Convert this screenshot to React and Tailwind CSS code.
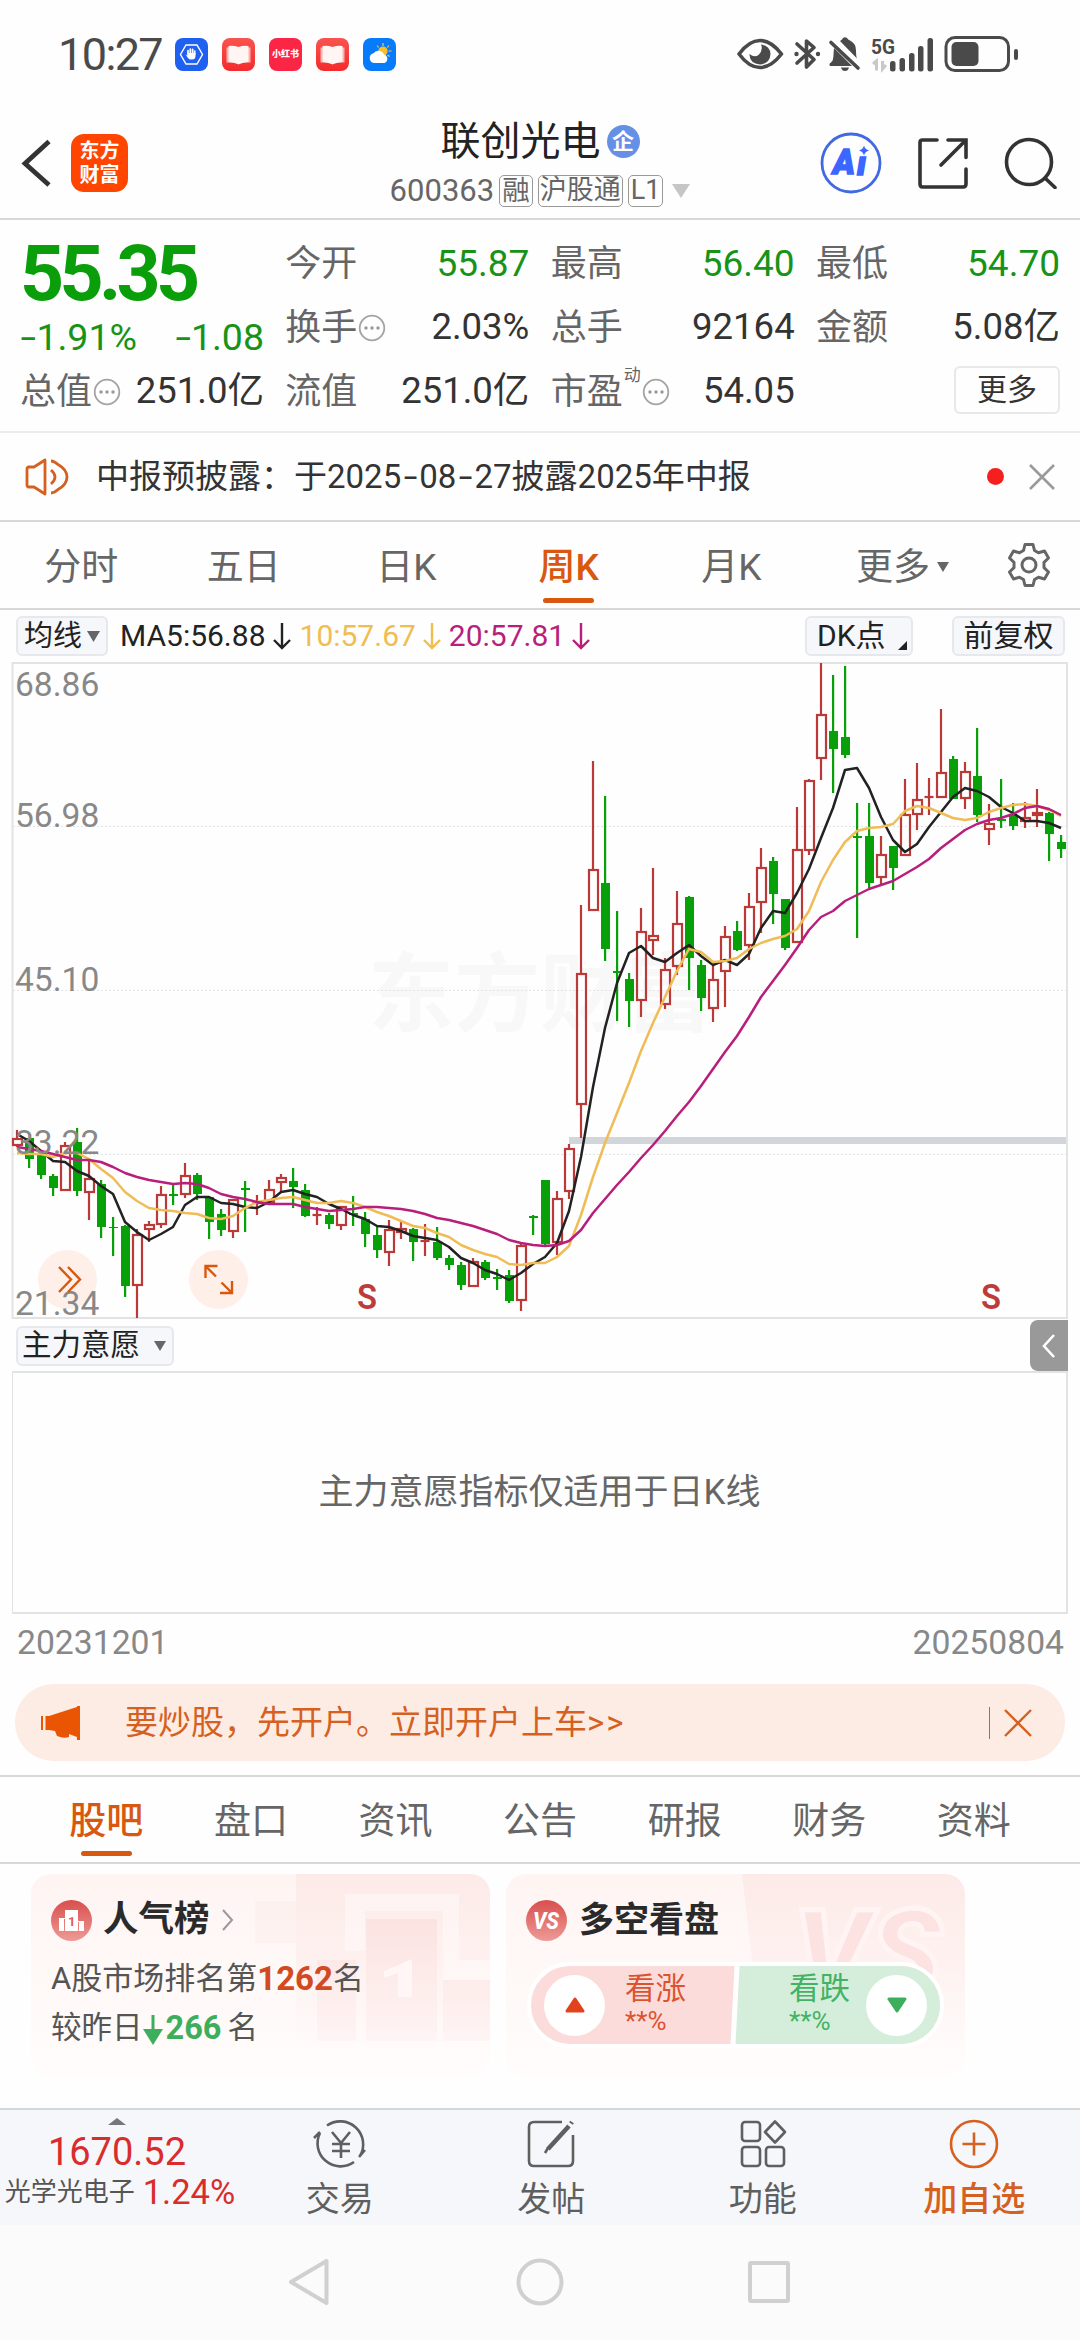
import React from "react";

// [up, high, body top, body bottom, low]
const candles = [
  [1, 1130, 1139, 1145, 1147],
  [0, 1138, 1138, 1159, 1168],
  [0, 1150, 1154, 1175, 1179],
  [0, 1174, 1176, 1188, 1196],
  [1, 1142, 1146, 1190, 1191],
  [0, 1128, 1142, 1191, 1196],
  [1, 1161, 1179, 1192, 1220],
  [0, 1180, 1184, 1227, 1238],
  [0, 1217, 1227, 1228, 1256],
  [0, 1225, 1226, 1286, 1297],
  [1, 1229, 1235, 1285, 1318],
  [1, 1221, 1225, 1229, 1242],
  [1, 1186, 1195, 1224, 1228],
  [0, 1184, 1194, 1196, 1205],
  [1, 1163, 1176, 1194, 1198],
  [0, 1173, 1175, 1194, 1200],
  [0, 1196, 1197, 1222, 1239],
  [0, 1209, 1214, 1230, 1236],
  [1, 1199, 1200, 1231, 1238],
  [0, 1181, 1188, 1190, 1232],
  [1, 1195, 1203, 1204, 1215],
  [1, 1180, 1190, 1202, 1202],
  [1, 1174, 1178, 1182, 1191],
  [0, 1168, 1181, 1187, 1208],
  [0, 1184, 1190, 1216, 1217],
  [1, 1207, 1215, 1215, 1225],
  [0, 1213, 1215, 1224, 1229],
  [1, 1206, 1207, 1225, 1230],
  [0, 1196, 1213, 1215, 1226],
  [0, 1212, 1219, 1234, 1247],
  [0, 1227, 1235, 1250, 1258],
  [1, 1220, 1230, 1252, 1266],
  [1, 1221, 1229, 1232, 1239],
  [0, 1228, 1229, 1242, 1261],
  [1, 1224, 1241, 1241, 1256],
  [0, 1227, 1242, 1258, 1260],
  [0, 1255, 1258, 1265, 1270],
  [0, 1262, 1265, 1285, 1290],
  [1, 1258, 1262, 1286, 1286],
  [0, 1260, 1262, 1278, 1280],
  [0, 1269, 1277, 1279, 1290],
  [0, 1270, 1275, 1301, 1303],
  [1, 1244, 1246, 1300, 1311],
  [0, 1215, 1216, 1218, 1235],
  [0, 1180, 1180, 1244, 1247],
  [1, 1191, 1199, 1242, 1255],
  [1, 1144, 1149, 1191, 1199],
  [1, 905, 974, 1104, 1138],
  [1, 761, 870, 910, 910],
  [0, 796, 883, 949, 961],
  [0, 911, 971, 973, 1021],
  [0, 973, 979, 1001, 1027],
  [1, 908, 932, 1000, 1017],
  [1, 868, 936, 940, 955],
  [1, 958, 970, 1004, 1009],
  [1, 891, 924, 966, 975],
  [0, 896, 897, 958, 990],
  [0, 960, 965, 998, 1011],
  [1, 965, 980, 1008, 1022],
  [1, 926, 937, 971, 1007],
  [0, 921, 931, 950, 951],
  [1, 893, 907, 945, 960],
  [1, 848, 868, 902, 933],
  [0, 857, 861, 894, 924],
  [0, 899, 899, 948, 950],
  [1, 807, 850, 942, 942],
  [1, 779, 781, 850, 855],
  [1, 663, 715, 758, 780],
  [0, 675, 731, 749, 793],
  [0, 666, 737, 755, 758],
  [0, 803, 836, 838, 938],
  [0, 803, 836, 883, 888],
  [1, 836, 855, 877, 884],
  [0, 846, 846, 868, 890],
  [1, 779, 815, 855, 855],
  [1, 763, 800, 814, 830],
  [1, 778, 797, 797, 815],
  [1, 709, 773, 797, 797],
  [0, 756, 759, 799, 799],
  [1, 762, 772, 798, 809],
  [0, 728, 776, 815, 822],
  [1, 804, 824, 829, 845],
  [0, 779, 819, 821, 828],
  [0, 803, 815, 826, 830],
  [1, 802, 818, 821, 828],
  [1, 789, 813, 815, 827],
  [0, 812, 813, 834, 861],
  [0, 835, 842, 849, 858],
];

const ma5 = [
  1134, 1141, 1151, 1161, 1162, 1171, 1176, 1186, 1194, 1222, 1232, 1240, 1234,
  1227, 1205, 1197, 1197, 1203, 1204, 1207, 1208, 1202, 1192, 1190, 1194, 1197,
  1204, 1209, 1215, 1219, 1226, 1227, 1231, 1236, 1238, 1240, 1247, 1258, 1263,
  1270, 1274, 1280, 1273, 1264, 1257, 1243, 1211, 1157, 1087, 1028, 983, 953,
  946, 958, 962, 953, 945, 956, 965, 960, 965, 954, 928, 911, 913, 893, 869,
  838, 808, 770, 768, 788, 817, 840, 852, 844, 827, 812, 797, 788, 791, 797,
  807, 813, 821, 821, 823, 828,
];

const ma10 = [
  1153, 1154, 1154, 1157, 1153, 1153, 1159, 1169, 1178, 1192, 1201, 1208, 1210,
  1211, 1213, 1214, 1218, 1219, 1216, 1208, 1202, 1200, 1198, 1197, 1200, 1203,
  1203, 1201, 1203, 1207, 1212, 1216, 1221, 1226, 1228, 1233, 1237, 1245, 1250,
  1254, 1257, 1264, 1265, 1263, 1263, 1257, 1246, 1215, 1177, 1143, 1113, 1083,
  1051, 1023, 997, 971, 949, 952, 962, 961, 958, 949, 943, 939, 936, 929, 911,
  882, 860, 842, 831, 828, 827, 824, 811, 806, 808, 813, 818, 820, 818, 812,
  808, 805, 804, 806, 810, 816,
];

const ma20 = [
  1147, 1149, 1151, 1154, 1157, 1160, 1160, 1162, 1167, 1173, 1177, 1180, 1182,
  1184, 1183, 1184, 1188, 1194, 1197, 1199, 1202, 1204, 1204, 1204, 1207, 1209,
  1211, 1210, 1209, 1207, 1207, 1208, 1209, 1211, 1214, 1218, 1220, 1223, 1226,
  1230, 1234, 1240, 1243, 1245, 1246, 1245, 1241, 1230, 1213, 1199, 1185, 1172,
  1158, 1145, 1131, 1116, 1102, 1086, 1069, 1052, 1036, 1017, 997, 981, 965,
  948, 930, 917, 911, 901, 895, 889, 885, 881, 874, 867, 859, 848, 839, 830,
  824, 820, 818, 814, 808, 806, 809, 815,
];

const toPoints = (list) => list.map((y, i) => `${17 + i * 12},${y}`).join(" ");

const Down = ({ className = "" }) => (
  <svg viewBox="0 0 12 12" className={className} fill="currentColor">
    <path d="M0 1h12L6 11z" />
  </svg>
);

const ArrowDown = () => (
  <svg
    viewBox="0 0 20 28"
    className="h-7 w-5"
    fill="none"
    stroke="currentColor"
    strokeWidth="2.4"
  >
    <path d="M10 1v25M2 18l8 8 8-8" />
  </svg>
);

const Info = () => (
  <svg viewBox="0 0 28 28" className="h-7 w-7" fill="none" stroke="#a3a3a3">
    <circle cx="14" cy="14" r="12.3" strokeWidth="1.8" />
    <g fill="#999" stroke="none">
      <circle cx="8" cy="14" r="1.7" />
      <circle cx="14" cy="14" r="1.7" />
      <circle cx="20" cy="14" r="1.7" />
    </g>
  </svg>
);

// wide minus / hyphen
const Dash = ({ className = "mx-[3.5px]" }) => (
  <span className={`inline-block scale-x-150 ${className}`}>-</span>
);

const BookApp = () => (
  <svg viewBox="0 0 33 33" className="h-[33px] w-[33px]">
    <defs>
      <linearGradient id="book" x1="0" y1="0" x2="0" y2="1">
        <stop offset="0" stopColor="#f9544f" />
        <stop offset="1" stopColor="#f52a2c" />
      </linearGradient>
    </defs>
    <rect width="33" height="33" rx="8" fill="url(#book)" />
    <path d="M4.5 9.5h24v15h-9l-3 2-3-2h-9z" fill="#fbb3ae" />
    <path
      d="M6.5 8q5-1 10 1 5-2 10-1v16q-5 .2-10 2.2-5-2-10-2.2z"
      fill="#fff5f2"
    />
  </svg>
);

const StatusBar = () => (
  <div className="flex h-[108px] items-center justify-between pl-[58px] pr-[59px] text-[#4a4a4a]">
    <div className="flex items-center">
      <span className="w-[117px] text-[45px] leading-none tracking-[-1.6px]">
        10:27
      </span>
      <div className="flex gap-[14px]">
        <svg viewBox="0 0 33 33" className="h-[33px] w-[33px]">
          <rect width="33" height="33" rx="8" fill="#1f60f0" />
          <path
            d="M11 7h11l5.5 9.5-5.5 9.500H11L5.500 16.500z"
            fill="none"
            stroke="#fff"
            strokeWidth="1.4"
          />
          <path
            d="M13 16v-3.500M15.300 15v-4M17.600 15v-3.600M19.700 16v-3"
            stroke="#fff"
            strokeWidth="1.7"
            strokeLinecap="round"
          />
          <path d="M10.500 16.500l2 1V15h8v3q0 3.500-3.500 3.500h-1q-2 0-3-1.500z" fill="#fff" />
        </svg>
        <BookApp />
        <div className="flex h-[33px] w-[33px] items-center justify-center rounded-lg bg-[#fb2545] text-[9px] font-black leading-none text-white">
          小红书
        </div>
        <BookApp />
        <svg viewBox="0 0 33 33" className="h-[33px] w-[33px]">
          <rect width="33" height="33" rx="8" fill="#077bfb" />
          <path
            d="M20 5v3M14 7.500l1.600 2M26 7.500l-1.600 2M25.500 13h3M24.500 17l2 1.500"
            stroke="#fbc93a"
            strokeWidth="1.2"
          />
          <circle cx="20" cy="13" r="4.600" fill="#fbbf24" />
          <path
            d="M11 25a5 5 0 01-.5-9.800 6 6 0 0110.500 1.300A4.500 4.500 0 0121.500 25z"
            fill="#fff"
          />
        </svg>
      </div>
    </div>
    <svg viewBox="0 0 284 40" className="h-10 w-[284px]">
      <g fill="none" stroke="#4a4a4a">
        <path
          d="M2 20Q12 6.500 23 6.500T44.500 20Q34 33.500 23 33.500T2 20z"
          strokeWidth="3.6"
          strokeLinejoin="round"
        />
        <path
          d="M60 10l17 15.500-7.500 7.500V7L77 13.500 60 29"
          strokeWidth="3.6"
          strokeLinejoin="round"
          strokeLinecap="round"
        />
        <path d="M94 8.500L121 34" strokeWidth="3.6" strokeLinecap="round" />
        <rect x="209" y="3.500" width="62.500" height="33" rx="9" strokeWidth="3" />
      </g>
      <g fill="#4a4a4a">
        <path d="M24 10.500q9 1 9.500 9.500-.5 9.500-10.500 10.500-10-1-10.500-9.500l0-1q5 4 9 1 5-5 2.500-10.500z" />
        <circle cx="59.500" cy="20" r="2.2" />
        <circle cx="81" cy="20" r="2.2" />
        <path d="M97 14l18 18H93q-1.500-2 1-3.500 2.500-2 2.500-8z" />
        <path d="M103 7q2-1 3-3 2-1.500 4 0 1 1.500 3 2.500 6 3 6 10 0 6 1 8z" />
        <path d="M104 33.500h8q-1 3.500-4 3.500t-4-3.500z" />
        <rect x="153" y="27" width="5.500" height="10.500" rx="2.500" />
        <rect x="162.500" y="24" width="5.500" height="13.500" rx="2.500" />
        <rect x="172" y="19" width="5.500" height="18.500" rx="2.500" />
        <rect x="181" y="12" width="5.500" height="25.500" rx="2.500" />
        <rect x="190.500" y="4" width="5.500" height="33.500" rx="2.500" />
        <rect x="214.500" y="8" width="27" height="24" rx="5" />
        <rect x="277" y="15" width="4" height="11" rx="2" />
        <text x="134" y="20" fontSize="21" fontWeight="700" textLength="24" lengthAdjust="spacingAndGlyphs">
          5G
        </text>
      </g>
      <path
        d="M136 30l3.500-3v9.500M149 31l-3.500 4V27"
        stroke="#c8c8c8"
        strokeWidth="3"
        fill="none"
      />
    </svg>
  </div>
);

const Header = () => (
  <div className="flex h-[112px] items-center justify-between border-b-2 border-[#d8d8d8] px-5">
    <div className="flex w-[330px] items-center gap-5">
      <svg viewBox="0 0 31 50" className="h-[50px] w-[31px]">
        <path
          d="M29 3.500L5 25.500l24 21.500"
          fill="none"
          stroke="#333"
          strokeWidth="4.8"
        />
      </svg>
      <div className="flex h-[58px] w-[57px] flex-col items-center justify-center rounded-[13px] bg-[#ff4500] text-xl font-bold leading-[24px] text-white">
        <span>东方</span>
        <span>财富</span>
      </div>
    </div>
    <div className="flex w-[320px] flex-col items-center pt-[5px]">
      <div className="flex items-center gap-1.5 text-[40px] leading-[50px] text-[#222]">
        联创光电
        <span className="flex h-[33px] w-[33px] items-center justify-center rounded-full bg-[#6690e6] text-[22px] font-bold leading-none text-white">
          企
        </span>
      </div>
      <div className="flex h-[48px] items-center gap-[5px] text-[31px] leading-none text-[#666]">
        <span>600363</span>
        <span className="flex h-8 items-center rounded-[5px] border border-[#999] px-[2px] text-[27.5px]">
          融
        </span>
        <span className="flex h-8 items-center rounded-[5px] border border-[#999] px-[1px] text-[27px]">
          沪股通
        </span>
        <span className="flex h-8 items-center rounded-[5px] border border-[#999] px-[2px] text-[27px]">
          L1
        </span>
        <svg viewBox="0 0 18 14" className="ml-1 h-[14px] w-[18px]">
          <path d="M0 0h18L9 14z" fill="#c6c6c6" />
        </svg>
      </div>
    </div>
    <div className="flex w-[330px] items-center justify-end gap-[35px] pr-[2px]">
      <svg viewBox="0 0 62 62" className="h-[62px] w-[62px]">
        <circle cx="31" cy="31" r="29" fill="none" stroke="#4169e1" strokeWidth="2.8" />
        <g fill="#3b66ff" stroke="#3b66ff" strokeWidth="1.5">
          <text x="13" y="42" fontSize="35" fontWeight="900" fontStyle="italic" textLength="22" lengthAdjust="spacingAndGlyphs">
            A
          </text>
          <text x="37" y="43" fontSize="33" fontWeight="900" fontStyle="italic">
            ı
          </text>
        </g>
        <path d="M44 13.500q1 4 5 5-4 1-5 5-1-4-5-5 4-1 5-5z" fill="#3b66ff" />
      </svg>
      <svg
        viewBox="0 0 52 52"
        className="h-[52px] w-[52px]"
        fill="none"
        stroke="#333"
        strokeWidth="3.6"
        strokeLinecap="round"
      >
        <path d="M20 3H5.500Q3 3 3 5.500v41Q3 50 5.500 50H46q3 0 3-3V32" />
        <path d="M31 3h18v17.500M48 4L24 28" />
      </svg>
      <svg
        viewBox="0 0 54 52"
        className="h-[52px] w-[54px]"
        fill="none"
        stroke="#333"
        strokeWidth="3.6"
        strokeLinecap="round"
      >
        <circle cx="25" cy="25" r="22.500" />
        <path d="M41 41l10 9.500" />
      </svg>
    </div>
  </div>
);

const Field = ({ label, info, sup, value, green }) => (
  <div className="flex h-16 w-[244px] items-center justify-between pt-[1px] leading-none">
    <span className="flex items-center gap-[1px] text-[36px] text-[#666]">
      {label}
      {sup && <span className="relative -top-4 text-[17px]">{sup}</span>}
      {info && <Info />}
    </span>
    <span
      className={
        green ? "text-[37px] text-[#179417]" : "text-[36.5px] text-[#333]"
      }
    >
      {value}
    </span>
  </div>
);

const Quote = () => (
  <div className="flex h-[213px] justify-between border-b-2 border-[#ececec] pl-5 pr-5 pt-[11px]">
    <div className="w-[244px]">
      <div className="flex h-[84px] items-center pt-0.5 text-[77px] font-bold leading-none tracking-[-4.7px] text-[#0a9f0a]">
        55.35
      </div>
      <div className="flex h-[44px] items-center justify-between pt-0.5 text-[37.5px] leading-none text-[#179417]">
        <span>
          <Dash className="mx-[3px]" />
          1.91%
        </span>
        <span>
          <Dash className="mx-[3px]" />
          1.08
        </span>
      </div>
      <Field label="总值" info value="251.0亿" />
    </div>
    <div>
      <Field label="今开" value="55.87" green />
      <Field label="换手" info value="2.03%" />
      <Field label="流值" value="251.0亿" />
    </div>
    <div>
      <Field label="最高" value="56.40" green />
      <Field label="总手" value="92164" />
      <Field label="市盈" sup="动" info value="54.05" />
    </div>
    <div className="flex flex-col items-end">
      <Field label="最低" value="54.70" green />
      <Field label="金额" value="5.08亿" />
      <button className="mt-[7px] h-12 w-[106px] rounded-md border-2 border-[#e8e8e8] text-[30px] leading-none text-[#333]">
        更多
      </button>
    </div>
  </div>
);

const Notice = () => (
  <div className="flex h-[89px] items-center border-b-2 border-[#d8d8d8] pl-6 pr-[25px]">
    <svg
      viewBox="0 0 46 40"
      className="h-10 w-[46px]"
      fill="none"
      stroke="#d5601f"
      strokeWidth="2.8"
      strokeLinejoin="round"
    >
      <path d="M10 10H5q-2 0-2 2v16q0 2 2 2h5l11 7V3z" />
      <path d="M27 13q8 7 0 14M27 4q3 0 7 3.500 9 5 9 12.500t-9 12.500q-4 3.500-7 3.500" />
    </svg>
    <p className="ml-[26px] flex-1 text-[33px] leading-none text-[#333]">
      中报预披露：于2025
      <Dash className="mx-[4.5px]" />
      08
      <Dash className="mx-[4.5px]" />
      27披露2025年中报
    </p>
    <span className="mr-[25px] h-[17px] w-[17px] rounded-full bg-[#f4201f]" />
    <svg viewBox="0 0 26 26" className="h-[26px] w-[26px]">
      <path d="M1 1l24 24M25 1L1 25" stroke="#9a9a9a" strokeWidth="2.6" />
    </svg>
  </div>
);

const periods = ["分时", "五日", "日K", "周K", "月K"];

const PeriodTabs = () => (
  <div className="flex h-[88px] items-center border-b-2 border-[#d8d8d8] text-[37px] leading-none text-[#666]">
    {periods.map((item) => (
      <div
        key={item}
        className={`relative flex h-full w-[162.500px] items-center justify-center pt-1 ${
          item === "周K" ? "font-medium text-[#d9580f]" : ""
        }`}
      >
        {item}
        {item === "周K" && (
          <span className="absolute bottom-[5px] h-[5px] w-[51px] rounded-full bg-[#d9580f]" />
        )}
      </div>
    ))}
    <div className="flex w-[180px] items-center justify-center gap-[7px] pt-1">
      更多
      <Down className="h-3 w-3" />
    </div>
    <svg
      viewBox="0 0 46 46"
      className="ml-[13px] h-[46px] w-[46px]"
      fill="none"
      stroke="#666"
      strokeWidth="3"
      strokeLinejoin="round"
    >
      <path d="M19 2.500h8l1.500 6 4 2.300 6-1.800 4 7-4.500 4.300v5.400l4.500 4.300-4 7-6-1.800-4 2.300-1.500 6h-8l-1.500-6-4-2.300-6 1.800-4-7L8 25.700v-5.400L3.500 16l4-7 6 1.800 4-2.300z" />
      <circle cx="23" cy="23" r="7" />
    </svg>
  </div>
);

const chip =
  "flex items-center rounded-md border-2 border-[#e6e8eb] bg-[#f6f7fa] leading-none text-[#222]";

const Toolbar = () => (
  <div className="flex h-[52px] items-center pl-4 pr-[15px] text-[30px] leading-none text-[#222]">
    <div className={`${chip} h-10 w-[92px] justify-between px-1.5 text-[29px]`}>
      均线
      <Down className="h-[13px] w-[13px] text-[#666]" />
    </div>
    <div className="ml-3 flex items-center gap-1.5">
      <span>MA5:56.88</span>
      <ArrowDown />
    </div>
    <div className="ml-2 flex items-center gap-1.5 text-[#f0bd50]">
      <span>10:57.67</span>
      <ArrowDown />
    </div>
    <div className="ml-[7px] flex items-center gap-1.5 text-[#b81e7b]">
      <span>20:57.81</span>
      <ArrowDown />
    </div>
    <div className={`${chip} relative ml-auto h-10 w-[108px] px-2.5 text-[30px]`}>
      DK点
      <svg viewBox="0 0 9 9" className="absolute bottom-1 right-1 h-[9px] w-[9px]">
        <path d="M9 0v9H0z" fill="#222" />
      </svg>
    </div>
    <div className={`${chip} ml-[39px] h-10 w-[113px] justify-center text-[30px]`}>
      前复权
    </div>
  </div>
);

const axis = [
  ["68.86", 696],
  ["56.98", 827],
  ["45.10", 991],
  ["33.22", 1154],
  ["21.34", 1315],
];

const Chart = () => (
  <svg viewBox="0 662 1080 658" className="block h-[658px] w-[1080px] overflow-visible">
    <text
      x="368"
      y="1025"
      fontSize="86"
      fontWeight="700"
      fill="#f8f8f8"
    >
      东方财富
    </text>
    <g stroke="#e3e3e3" strokeDasharray="2 2">
      <path d="M13 826.500H1066M13 990.500H1066M13 1154.500H1066" />
    </g>
    <path d="M12.500 663H1067V1318H12.500z" fill="none" stroke="#e3e3e3" strokeWidth="2" />
    <circle cx="67.500" cy="1279.500" r="29.500" fill="#fef0e8" />
    <circle cx="218.500" cy="1279.500" r="29.500" fill="#fef0e8" />
    <path d="M569 1140.500H1066" stroke="#d2d6da" strokeWidth="7" />
    {candles.map(([up, high, top, bottom, low], i) => {
      const x = 17 + i * 12;
      if (up) {
        return (
          <g key={i} stroke="#bb3a38" strokeWidth="2.2" fill="none">
            <path d={`M${x} ${high}V${top}M${x} ${bottom}V${low}`} />
            {bottom - top < 2 ? (
              <path d={`M${x - 4.5} ${top}h9`} />
            ) : (
              <rect x={x - 4} y={top} width="9" height={bottom - top} />
            )}
          </g>
        );
      }
      return (
        <g key={i} fill="#08a008">
          <rect x={x - 1} y={high} width="2.2" height={low - high} />
          <rect x={x - 4} y={top} width="9" height={bottom - top} />
        </g>
      );
    })}
    <g fill="none" strokeWidth="2.5" strokeLinejoin="round">
      <polyline points={toPoints(ma5)} stroke="#222" />
      <polyline points={toPoints(ma10)} stroke="#efbc56" />
      <polyline points={toPoints(ma20)} stroke="#b81e7b" />
    </g>
    <g fill="#888" fontSize="33.600">
      {axis.map(([label, y]) => (
        <text key={label} x="15" y={y}>
          {label}
        </text>
      ))}
    </g>
    <g fill="none" stroke="#d9580f" strokeWidth="2.4">
      <path d="M59 1267l12 12.500-12 12.500M68 1267l12 12.500-12 12.500" />
      <path d="M205.500 1278v-12h12M206 1266.500l10 10M220 1293h12v-12M231.500 1292.500l-10-10" />
    </g>
    <g fill="#bf3b3b" fontSize="35" fontWeight="600" textAnchor="middle">
      <text x="367" y="1308.500" textLength="20" lengthAdjust="spacingAndGlyphs">
        S
      </text>
      <text x="991" y="1308.500" textLength="20" lengthAdjust="spacingAndGlyphs">
        S
      </text>
    </g>
  </svg>
);

const SubChart = () => (
  <div>
    <div className="flex h-[51px] items-center justify-between pl-4 pr-3">
      <div className={`${chip} h-10 w-[158px] justify-between pl-1 pr-1.5 text-[29.500px]`}>
        主力意愿
        <Down className="h-3 w-3 text-[#666]" />
      </div>
      <div className="flex h-[51px] w-[38px] items-center justify-center rounded-l-lg bg-[#999]">
        <svg viewBox="0 0 14 24" className="h-6 w-[14px]">
          <path d="M12 1L2 12l10 11" fill="none" stroke="#fff" strokeWidth="2.6" />
        </svg>
      </div>
    </div>
    <div className="ml-3 mr-3 flex h-[243px] items-center justify-center border-2 border-l-1 border-[#e3e3e3] text-[35px] leading-none text-[#666]">
      主力意愿指标仅适用于日K线
    </div>
    <div className="flex h-[70px] items-start justify-between pl-[17px] pr-4 pt-3 text-[33.700px] leading-none text-[#888]">
      <span>20231201</span>
      <span>20250804</span>
    </div>
  </div>
);

const Banner = () => (
  <div className="mx-[15px] flex h-[77px] items-center rounded-full bg-[#fcece3] pl-[26px] pr-[33px] text-[33px] leading-none text-[#d5601f]">
    <svg viewBox="0 0 40 36" className="h-9 w-10" fill="#ea5504">
      <path d="M0 11h2v14H0zM8 11L36 2V1h3v34h-3v-3l-8-3v3q-5 2-12-1l-2-5-6-1z" />
      <path d="M4.500 11H8v14H4.500z" />
    </svg>
    <span className="ml-[44px] flex-1">
      要炒股，先开户。立即开户上车
      <span className="tracking-[2px]">&gt;&gt;</span>
    </span>
    <span className="mr-[14px] h-8 w-px bg-[#d5601f]" />
    <svg viewBox="0 0 28 28" className="h-7 w-7">
      <path d="M1 1l26 26M27 1L1 27" stroke="#d5601f" strokeWidth="2.4" />
    </svg>
  </div>
);

const sections = ["股吧", "盘口", "资讯", "公告", "研报", "财务", "资料"];

const SectionTabs = () => (
  <div className="mt-[14px] flex h-[89px] items-center border-y-2 border-[#d8d8d8] pl-[34px] text-[37px] leading-none text-[#666]">
    {sections.map((item, idx) => (
      <div
        key={item}
        className={`relative flex h-full w-[144.600px] items-center justify-center pt-1 ${
          idx === 0 ? "font-medium text-[#d9580f]" : ""
        }`}
      >
        {item}
        {idx === 0 && (
          <span className="absolute bottom-[6px] h-[5px] w-[51px] rounded-full bg-[#d9580f]" />
        )}
      </div>
    ))}
  </div>
);

const Cards = () => (
  <div className="flex h-[244px] gap-4 pl-[31px] pt-[10px] leading-none">
    <div className="relative h-[203px] w-[459px] overflow-hidden rounded-[20px] bg-linear-to-b from-[#fef5f3] to-[#fffcfb] px-5">
      <svg viewBox="0 0 459 203" className="absolute inset-0 h-full w-full">
        <defs>
          <linearGradient id="fade" x1="0" y1="0" x2="0" y2="203" gradientUnits="userSpaceOnUse">
            <stop offset="0" stopColor="#fbe3e0" stopOpacity=".6" />
            <stop offset=".85" stopColor="#fbe3e0" stopOpacity="0" />
          </linearGradient>
          <linearGradient id="bars" x1="0" y1="40" x2="0" y2="170" gradientUnits="userSpaceOnUse">
            <stop offset="0" stopColor="#fbe2e0" />
            <stop offset="1" stopColor="#fef5f4" />
          </linearGradient>
        </defs>
        <path d="M265 0h194v203H265z" fill="url(#fade)" />
        <path d="M224 27h42v42h-42z" fill="#fceeec" opacity=".6" />
        <path d="M314 20h114v66h31v82H412V37h-78v40h-20z" fill="#fff" opacity=".4" />
        <path
          d="M286 86h39v81h-39zM335 45h71v122h-71zM412 106h47v61h-47z"
          fill="url(#bars)"
        />
        <path d="M353 97l28-12v38h-14V99l-14 5z" fill="#fff6f5" />
      </svg>
      <div className="relative">
        <div className="flex h-[92px] items-center">
          <svg viewBox="0 0 41 41" className="h-[41px] w-[41px]">
            <defs>
              <linearGradient id="red" x1="0" y1="0" x2="0" y2="1">
                <stop offset="0" stopColor="#d84f4d" />
                <stop offset="1" stopColor="#ee9a97" />
              </linearGradient>
            </defs>
            <circle cx="20.500" cy="20.500" r="20.500" fill="url(#red)" />
            <path d="M8 18h6v-8h13v11h6v10h-5V22h-1v9H14V19h-1v12H8z" fill="#fff" />
            <text x="17" y="26" fontSize="13" fontWeight="700" fill="#d9605e">
              1
            </text>
          </svg>
          <span className="ml-[11px] text-[35.500px] font-bold text-[#2a2a2a]">人气榜</span>
          <svg viewBox="0 0 12 22" className="ml-3 h-[22px] w-3">
            <path d="M1 1l9 10-9 10" fill="none" stroke="#999" strokeWidth="2" />
          </svg>
        </div>
        <p className="flex h-[24px] items-center text-[31px] text-[#555]">
          A股市场排名第
          <b className="text-[33px]">
            <span className="text-[#d24a20]">1262</span>
          </b>
          名
        </p>
        <p className="mt-[26px] flex h-[24px] items-center text-[30.500px] text-[#555]">
          较昨日
          <svg viewBox="0 0 20 30" className="mt-1 h-[30px] w-5" fill="#3cae5c">
            <path d="M8.500 0h3v14H20L10 30 0 14h8.500z" />
          </svg>
          <b className="ml-[3px] mr-1.5 text-[32.500px] text-[#3cae5c]">266</b>名
        </p>
      </div>
    </div>
    <div className="relative h-[203px] w-[459px] overflow-hidden rounded-[20px] bg-linear-to-b from-[#fef5f3] to-[#fffcfb] px-5">
      <svg viewBox="0 0 459 203" className="absolute inset-0 h-full w-full">
        <path d="M236 0h223v203H260z" fill="url(#fade)" />
        <text x="288" y="120" fontSize="118" fontWeight="900" fontStyle="italic" fill="#fce3e2" stroke="#fff4f3" strokeWidth="5">
          VS
        </text>
      </svg>
      <div className="relative">
        <div className="flex h-[92px] items-center">
          <svg viewBox="0 0 41 41" className="h-[41px] w-[41px]">
            <circle cx="20.500" cy="20.500" r="20.500" fill="url(#red)" />
            <text x="7" y="29" fontSize="23" fontWeight="800" fontStyle="italic" fill="#fff" textLength="26" lengthAdjust="spacingAndGlyphs">
              VS
            </text>
          </svg>
          <span className="ml-3 text-[35px] font-bold text-[#2a2a2a]">多空看盘</span>
        </div>
        <div className="relative -mt-1 ml-[1px] flex h-[86px] w-[417px] items-center justify-between overflow-hidden rounded-full border-4 border-white bg-[#fbdcda] px-[13px]">
          <svg viewBox="0 0 409 78" className="absolute inset-0 h-full w-full">
            <path d="M206 0H409V78H202z" fill="#d5eedb" />
            <path d="M206 0l-4 78" stroke="#fff" strokeWidth="5" />
          </svg>
          <div className="relative flex items-center gap-5 text-[30.500px] text-[#dc5330]">
            <span className="flex h-[61px] w-[61px] items-center justify-center rounded-full bg-white">
              <svg viewBox="0 0 20 16" className="h-4 w-5">
                <path d="M10 2l8 12H2z" fill="#e2431c" stroke="#e2431c" strokeWidth="3" strokeLinejoin="round" />
              </svg>
            </span>
            <div className="-mt-1.5">
              <div className="leading-[37px]">看涨</div>
              <div className="text-[26px] leading-[28px]">**%</div>
            </div>
          </div>
          <div className="relative flex items-center gap-4 text-[30.500px] text-[#44b264]">
            <div className="-mt-1.5">
              <div className="leading-[37px]">看跌</div>
              <div className="text-[26px] leading-[28px]">**%</div>
            </div>
            <span className="flex h-[61px] w-[61px] items-center justify-center rounded-full bg-white">
              <svg viewBox="0 0 20 16" className="h-4 w-5">
                <path d="M10 14L2 2h16z" fill="#3cae5c" stroke="#3cae5c" strokeWidth="3" strokeLinejoin="round" />
              </svg>
            </span>
          </div>
        </div>
      </div>
    </div>
  </div>
);

const NavItem = ({ label, active, children }) => (
  <div
    className={`flex w-[211.500px] flex-col items-center pt-[7px] text-[34px] leading-none ${
      active ? "font-medium text-[#d5601f]" : "text-[#5f5f5f]"
    }`}
  >
    <svg
      viewBox="0 0 54 54"
      className="h-[54px] w-[54px]"
      fill="none"
      stroke="currentColor"
      strokeWidth="2.6"
    >
      {children}
    </svg>
    <span className="mt-[11px]">{label}</span>
  </div>
);

const BottomNav = () => (
  <div className="flex h-[117px] border-t-2 border-[#d3d7dc] bg-[#f6f7fa]">
    <div className="flex w-[234px] flex-col items-center leading-none">
      <svg viewBox="0 0 18 7" className="mt-2 h-[7px] w-[18px]">
        <path d="M9 0l9 7H0z" fill="#777" />
      </svg>
      <span className="mt-2 text-[38px] text-[#d92c2c]">1670.52</span>
      <div className="mt-1 flex items-center gap-2 whitespace-nowrap pl-1.5 text-[26px] text-[#555]">
        光学光电子
        <span className="text-[34.500px] text-[#d92c2c]">1.24%</span>
      </div>
    </div>
    <NavItem label="交易">
      <path d="M14 8.500A23 23 0 0147 39M41 45A23 23 0 017 16M1 21l6-6M52 33l-6 7" />
      <path d="M19 15l9 11 9-11M28 26v15M19 27h18M19 34h18" />
    </NavItem>
    <NavItem label="发帖">
      <path d="M38 5H10q-5 0-5 5v34q0 5 5 5h34q5 0 5-5V18" />
      <path d="M45 9L24 32M48 5l-1 1.500" strokeWidth="4.5" />
      <path d="M24 31l-3 5" />
    </NavItem>
    <NavItem label="功能">
      <rect x="6" y="5" width="18" height="19" rx="3" />
      <rect x="6" y="30" width="18" height="19" rx="3" />
      <rect x="30" y="30" width="18" height="19" rx="3" />
      <path d="M39 4.500l10 10.500-10 10.500L29 15z" strokeLinejoin="round" />
    </NavItem>
    <NavItem label="加自选" active>
      <circle cx="27" cy="27" r="23" />
      <path d="M27 15.500v23M15.500 27h23" />
    </NavItem>
  </div>
);

const SystemNav = () => (
  <div className="h-[116px] bg-[#fbfbfb]">
    <svg
      viewBox="0 0 1080 116"
      className="h-[116px] w-[1080px]"
      fill="none"
      stroke="#d0d0d0"
      strokeWidth="4"
      strokeLinejoin="round"
    >
      <path d="M291 57l35.500-21v42z" />
      <circle cx="540" cy="57" r="21.500" />
      <rect x="750" y="38" width="38" height="38" rx="1" />
    </svg>
  </div>
);

const App = () => {
  return (
    <div className="h-[2340px] w-[1080px] overflow-hidden bg-[#fefefe] font-['Roboto','Noto_Sans_CJK_SC',sans-serif]">
      <StatusBar />
      <Header />
      <Quote />
      <Notice />
      <PeriodTabs />
      <Toolbar />
      <Chart />
      <SubChart />
      <Banner />
      <SectionTabs />
      <Cards />
      <BottomNav />
      <SystemNav />
    </div>
  );
};

export default App;
